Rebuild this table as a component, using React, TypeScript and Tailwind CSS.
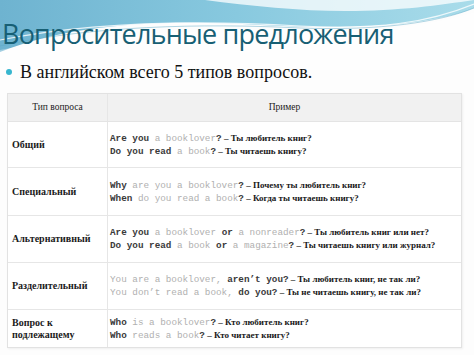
import React from "react";

const B = ({ children }: { children: React.ReactNode }) => (
  <span className="font-bold text-[#3a3a3a]">{children}</span>
);
const G = ({ children }: { children: React.ReactNode }) => (
  <span className="text-[#b0b0b0]">{children}</span>
);
const R = ({ children }: { children: React.ReactNode }) => (
  <span className="font-bold text-[#1a1a1a] text-[9px] [font-family:'Liberation_Serif',serif]">
    {children}
  </span>
);

type Row = { label: React.ReactNode; h: string; lines: React.ReactNode[] };

const rows: Row[] = [
  {
    label: "Общий",
    h: "h-[46px]",
    lines: [
      <>
        <B>Are you</B> <G>a booklover</G>
        <B>?</B>
        <R> – Ты любитель книг?</R>
      </>,
      <>
        <B>Do you read</B> <G>a book</G>
        <B>?</B>
        <R> – Ты читаешь книгу?</R>
      </>,
    ],
  },
  {
    label: "Специальный",
    h: "h-[48px]",
    lines: [
      <>
        <B>Why</B> <G>are you a booklover</G>
        <B>?</B>
        <R> – Почему ты любитель книг?</R>
      </>,
      <>
        <B>When</B> <G>do you read a book</G>
        <B>?</B>
        <R> – Когда ты читаешь книгу?</R>
      </>,
    ],
  },
  {
    label: "Альтернативный",
    h: "h-[47px]",
    lines: [
      <>
        <B>Are you</B> <G>a booklover</G> <B>or</B> <G>a nonreader</G>
        <B>?</B>
        <R> – Ты любитель книг или нет?</R>
      </>,
      <>
        <B>Do you read</B> <G>a book</G> <B>or</B> <G>a magazine</G>
        <B>?</B>
        <R> – Ты читаешь книгу или журнал?</R>
      </>,
    ],
  },
  {
    label: "Разделительный",
    h: "h-[47px]",
    lines: [
      <>
        <G>You are a booklover,</G> <B>aren’t you?</B>
        <R> – Ты любитель книг, не так ли?</R>
      </>,
      <>
        <G>You don’t read a book,</G> <B>do you?</B>
        <R> – Ты не читаешь книгу, не так ли?</R>
      </>,
    ],
  },
  {
    label: (
      <>
        Вопрос к
        <br />
        подлежащему
      </>
    ),
    h: "h-[37px]",
    lines: [
      <>
        <B>Who</B> <G>is a booklover</G>
        <B>?</B>
        <R> – Кто любитель книг?</R>
      </>,
      <>
        <B>Who</B> <G>reads a book</G>
        <B>?</B>
        <R> – Кто читает книгу?</R>
      </>,
    ],
  },
];

export default function App() {
  return (
    <div className="relative w-[474px] h-[355px] overflow-hidden bg-[#fdfdfd]">
      <svg
        className="absolute left-0 top-0"
        width="474"
        height="70"
        viewBox="0 0 474 70"
      >
        <defs>
          <linearGradient id="wave" x1="0" y1="0" x2="1" y2="0">
            <stop offset="0" stopColor="#6eb3d0" />
            <stop offset="0.5" stopColor="#88c9df" />
            <stop offset="1" stopColor="#a9dcea" />
          </linearGradient>
        </defs>
        <path
          d="M0,0 H474 V8 C430,26 350,30 260,25 C160,19 70,24 0,52 Z"
          fill="url(#wave)"
        />
        <path
          d="M205,0 C250,6 300,11 345,11 C400,11 440,5 474,0 Z"
          fill="#ffffff"
          opacity="0.75"
        />
        <path
          d="M0,40 C90,22 200,20 300,26 C380,30 430,22 474,4"
          stroke="#ffffff"
          strokeWidth="1.2"
          fill="none"
          opacity="0.8"
        />
        <path
          d="M0,46 C90,26 200,23 300,28 C380,31 440,22 474,8"
          stroke="#5aa9c6"
          strokeWidth="0.8"
          fill="none"
          opacity="0.6"
        />
        <path
          d="M0,50 C80,34 200,28 310,30 C390,32 440,22 474,12 V70 H0 Z"
          fill="#ffffff"
          opacity="0.35"
        />
      </svg>

      <div className="relative flex flex-col">
        <div className="pl-[2px] pt-[16px] h-[54px] text-[27px] tracking-[-0.8px] leading-[36px] text-[#175f74] [font-family:'Open_Sans',sans-serif]">
          Вопросительные предложения
        </div>
        <div className="flex items-center pl-[6px] mt-[4px] h-[28px]">
          <div className="w-[6px] h-[6px] rounded-full bg-[#37b6cf] mr-[8px]" />
          <span className="text-[18px] text-[#111] [font-family:'Liberation_Serif',serif]">
            В английском всего 5 типов вопросов.
          </span>
        </div>

        <div className="ml-[7px] mt-[7px] w-[455px] border border-[#e2e2e2] shadow-[1px_1px_2px_rgba(0,0,0,0.06)]">
          <div className="grid grid-cols-[100px_1fr] h-[28px] bg-[#f1f1f1] border-b border-[#e4e4e4] text-[9.5px] text-[#222] [font-family:'Liberation_Serif',serif]">
            <div className="flex items-center justify-center border-r border-[#e6e6e6]">
              Тип вопроса
            </div>
            <div className="flex items-center justify-center">Пример</div>
          </div>
          {rows.map((r, i) => (
            <div
              key={i}
              className={`grid grid-cols-[100px_1fr] ${r.h} bg-white ${
                i < rows.length - 1 ? "border-b border-[#e6e6e6]" : ""
              }`}
            >
              <div className="flex items-center pl-[4px] border-r border-[#e6e6e6] text-[10px] leading-[12px] text-[#1a1a1a] font-bold [font-family:'Liberation_Serif',serif]">
                <div>{r.label}</div>
              </div>
              <div className="flex flex-col justify-center pl-[2px] text-[9.3px] leading-[12px] whitespace-pre [font-family:'Liberation_Mono','Courier_New',monospace]">
                {r.lines.map((l, j) => (
                  <div key={j}>{l}</div>
                ))}
              </div>
            </div>
          ))}
        </div>
      </div>
    </div>
  );
}
